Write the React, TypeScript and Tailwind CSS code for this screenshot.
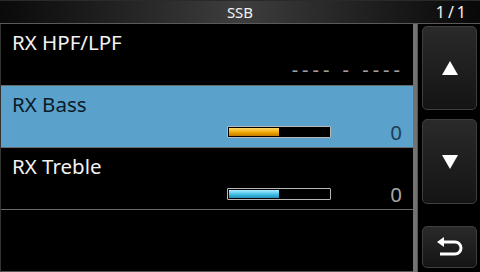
import React from "react";

const font = { fontFamily: '"Noto Sans", "Open Sans", sans-serif' };

function Bar({ color, pct }: { color: "orange" | "blue"; pct: number }) {
  return (
    <div className="w-[104px] h-[12px] border border-[#b8b8b8] bg-black rounded-[1px] p-[1px] flex">
      <div
        className={
          color === "orange"
            ? "h-full bg-linear-to-b from-[#ffd860] via-[#f2ae00] to-[#c47a00]"
            : "h-full bg-linear-to-b from-[#a8ecff] via-[#45c4e8] to-[#1f8fb8]"
        }
        style={{ width: `${pct}%` }}
      />
    </div>
  );
}

function BackIcon() {
  return (
    <svg width="28" height="22" viewBox="0 0 28 22" fill="none">
      <path d="M1 6 L8 1 L8 11 Z" fill="white" />
      <path
        d="M7 6 H19 A6 6 0 0 1 19 18 H4"
        stroke="white"
        strokeWidth="3"
        fill="none"
      />
    </svg>
  );
}

export default function App() {
  return (
    <div className="w-[480px] h-[272px] bg-black flex flex-col overflow-hidden" style={font}>
      {/* Title bar */}
      <div className="h-[24px] relative flex items-center justify-center border-t border-[#2a2a2a] border-b border-b-[#5a5a5a] bg-linear-to-r from-[#0a0a0a] via-[#3e3e3e] to-[#080808]">
        <span className="text-[15px] leading-[20px] text-[#f2f2f2]">SSB</span>
        <span className="absolute right-[11px] top-[1px] text-[16px] leading-[20px] text-[#f2f2f2] tracking-[3px]">
          1/1
        </span>
      </div>

      <div className="flex flex-1">
        {/* List */}
        <div className="w-[413px] flex flex-col border-l border-[#333] border-b border-b-[#555]">
          {/* Row 1 */}
          <div className="h-[62px] flex flex-col border-b border-[#6a6a6a] pl-[11px] pr-[11px]">
            <div className="mt-[6px] h-[24px] text-[20.5px] leading-[24px] text-[#f2f2f2]">RX HPF/LPF</div>
            <div className="mt-[4px] h-[24px] flex items-center justify-end">
              <span className="text-[20px] leading-[24px] text-[#a0a0a0] tracking-[4px] mr-[-2px]">---- - ----</span>
            </div>
          </div>
          {/* Row 2 selected */}
          <div className="h-[62px] flex flex-col border-b border-[#6a6a6a] bg-[#5aa1cc] pl-[11px] pr-[11px]">
            <div className="mt-[6px] h-[24px] text-[20.5px] leading-[24px] text-[#0c1a26]">RX Bass</div>
            <div className="mt-[4px] h-[24px] flex items-center justify-end">
              <Bar color="orange" pct={50} />
              <span className="w-[71px] text-right text-[20.5px] leading-[24px] text-[#1d3d55]">0</span>
            </div>
          </div>
          {/* Row 3 */}
          <div className="h-[62px] flex flex-col border-b border-[#6a6a6a] pl-[11px] pr-[11px]">
            <div className="mt-[6px] h-[24px] text-[20.5px] leading-[24px] text-[#f2f2f2]">RX Treble</div>
            <div className="mt-[4px] h-[24px] flex items-center justify-end">
              <Bar color="blue" pct={50} />
              <span className="w-[71px] text-right text-[20.5px] leading-[24px] text-[#a8a8a8]">0</span>
            </div>
          </div>
          <div className="flex-1" />
        </div>

        {/* Scrollbar */}
        <div className="w-[5px] bg-[#727272] border-r border-[#555]" />

        {/* Buttons */}
        <div className="flex-1 flex flex-col pl-[4px] pr-[3px] pt-[2px]">
          <div className="h-[84px] rounded-[5px] border border-[#3e3e3e] bg-linear-to-b from-[#2a2a2a] to-[#141414] flex items-center justify-center">
            <svg width="16" height="14" viewBox="0 0 16 14">
              <path d="M8 0 L16 14 L0 14 Z" fill="white" />
            </svg>
          </div>
          <div className="mt-[9px] h-[85px] rounded-[5px] border border-[#3e3e3e] bg-linear-to-b from-[#2a2a2a] to-[#141414] flex items-center justify-center">
            <svg width="16" height="14" viewBox="0 0 16 14">
              <path d="M0 0 L16 0 L8 14 Z" fill="white" />
            </svg>
          </div>
          <div className="mt-[22px] h-[42px] rounded-[5px] border border-[#3e3e3e] bg-linear-to-b from-[#2a2a2a] to-[#141414] flex items-center justify-center">
            <BackIcon />
          </div>
        </div>
      </div>
    </div>
  );
}
